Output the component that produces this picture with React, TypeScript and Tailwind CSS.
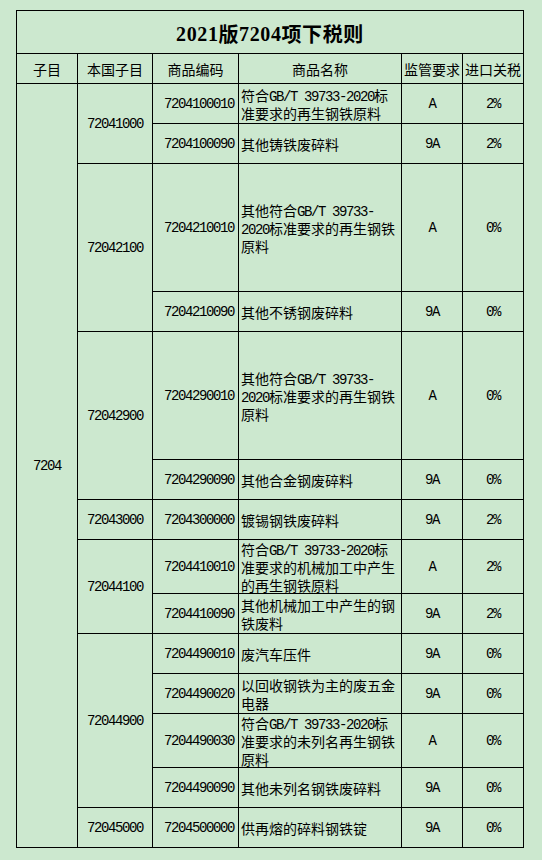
import React from "react";

interface TaxRow {
    code: string;
    name: string[];
    req: string;
    tax: string;
}

interface Group {
    sub: string;
    span: string;
    rows: TaxRow[];
}

const groups: Group[] = [
    {
        sub: "72041000",
        span: "row-span-2",
        rows: [
            { code: "7204100010", name: ["符合GB/T 39733-2020标", "准要求的再生钢铁原料"], req: "A", tax: "2%" },
            { code: "7204100090", name: ["其他铸铁废碎料"], req: "9A", tax: "2%" },
        ],
    },
    {
        sub: "72042100",
        span: "row-span-2",
        rows: [
            { code: "7204210010", name: ["其他符合GB/T 39733-", "2020标准要求的再生钢铁", "原料"], req: "A", tax: "0%" },
            { code: "7204210090", name: ["其他不锈钢废碎料"], req: "9A", tax: "0%" },
        ],
    },
    {
        sub: "72042900",
        span: "row-span-2",
        rows: [
            { code: "7204290010", name: ["其他符合GB/T 39733-", "2020标准要求的再生钢铁", "原料"], req: "A", tax: "0%" },
            { code: "7204290090", name: ["其他合金钢废碎料"], req: "9A", tax: "0%" },
        ],
    },
    {
        sub: "72043000",
        span: "row-span-1",
        rows: [{ code: "7204300000", name: ["镀锡钢铁废碎料"], req: "9A", tax: "2%" }],
    },
    {
        sub: "72044100",
        span: "row-span-2",
        rows: [
            { code: "7204410010", name: ["符合GB/T 39733-2020标", "准要求的机械加工中产生", "的再生钢铁原料"], req: "A", tax: "2%" },
            { code: "7204410090", name: ["其他机械加工中产生的钢", "铁废料"], req: "9A", tax: "2%" },
        ],
    },
    {
        sub: "72044900",
        span: "row-span-4",
        rows: [
            { code: "7204490010", name: ["废汽车压件"], req: "9A", tax: "0%" },
            { code: "7204490020", name: ["以回收钢铁为主的废五金", "电器"], req: "9A", tax: "0%" },
            { code: "7204490030", name: ["符合GB/T 39733-2020标", "准要求的未列名再生钢铁", "原料"], req: "A", tax: "0%" },
            { code: "7204490090", name: ["其他未列名钢铁废碎料"], req: "9A", tax: "0%" },
        ],
    },
    {
        sub: "72045000",
        span: "row-span-1",
        rows: [{ code: "7204500000", name: ["供再熔的碎料钢铁锭"], req: "9A", tax: "0%" }],
    },
];

// ascii runs get the narrow mono face, like SimSun's half-width glyphs
function Mixed({ text }: { text: string }) {
    const parts = text.split(/([\x00-\x7F]+)/).filter((p) => p !== "");
    return (
        <>
            {parts.map((p, i) =>
                /^[\x00-\x7F]+$/.test(p) ? (
                    <span key={i} className="font-['Liberation_Mono',monospace] tracking-[-1.4px]">
                        {p}
                    </span>
                ) : (
                    <span key={i}>{p}</span>
                )
            )}
        </>
    );
}

const cell = "border-r border-b border-black flex items-center";
const mono = "font-['Liberation_Mono',monospace] tracking-[-1.4px]";

export default function App() {
    return (
        <div className="min-h-screen w-full bg-[#cce8cf] pt-[10px] pl-[16px] text-black font-['Noto_Sans_CJK_SC',sans-serif] text-[14px] leading-[18px]">
            <div className="grid w-[508px] border-l border-t border-black grid-cols-[61px_75px_86px_163px_61px_61px] grid-rows-[43px_30px_40px_40px_128px_40px_128px_40px_40px_54px_40px_40px_40px_54px_40px_40px]">
                <div className={`${cell} col-span-6 justify-center font-bold text-[20px] leading-[24px] tracking-[0.6px] pt-[3px]`}>
                    <span className="font-['Liberation_Serif',serif]">2021</span>
                    <span>版</span>
                    <span className="font-['Liberation_Serif',serif]">7204</span>
                    <span>项下税则</span>
                </div>

                <div className={`${cell} justify-center`}>子目</div>
                <div className={`${cell} justify-center`}>本国子目</div>
                <div className={`${cell} justify-center`}>商品编码</div>
                <div className={`${cell} justify-center`}>商品名称</div>
                <div className={`${cell} justify-center whitespace-nowrap`}>监管要求</div>
                <div className={`${cell} justify-center whitespace-nowrap`}>进口关税</div>

                <div className={`${cell} row-span-14 justify-center ${mono}`}>7204</div>

                {groups.map((g) => (
                    <React.Fragment key={g.sub}>
                        <div className={`${cell} ${g.span} col-start-2 justify-center ${mono}`}>{g.sub}</div>
                        {g.rows.map((r, ri) => (
                            <React.Fragment key={r.code}>
                                <div className={`${cell} col-start-3 ${ri === 0 ? "" : ""} justify-end pr-[4px] ${mono}`}>
                                    {r.code}
                                </div>
                                <div className={`${cell} pl-[2px] whitespace-nowrap`}>
                                    <div className="flex flex-col">
                                        {r.name.map((line, li) => (
                                            <div key={li} className="h-[18px] shrink-0">
                                                <Mixed text={line} />
                                            </div>
                                        ))}
                                    </div>
                                </div>
                                <div className={`${cell} justify-center ${mono}`}>{r.req}</div>
                                <div className={`${cell} justify-center ${mono}`}>{r.tax}</div>
                            </React.Fragment>
                        ))}
                    </React.Fragment>
                ))}
            </div>
        </div>
    );
}
